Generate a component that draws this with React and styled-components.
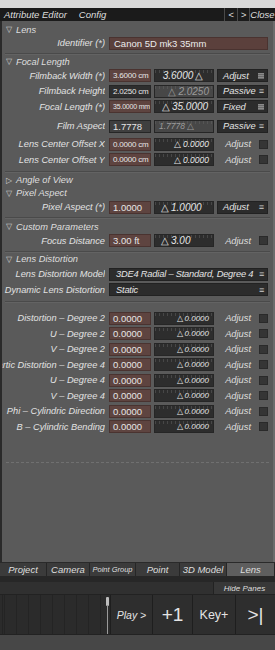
import styled, { createGlobalStyle } from "styled-components";

const Global = createGlobalStyle`
  html, body {
    margin: 0;
    padding: 0;
    background: #474747;
    overflow: hidden;
  }
  * { box-sizing: border-box; }
`;

const Page = styled.div`
  width: 275px;
  height: 650px;
  display: flex;
  flex-direction: column;
  font-family: "Liberation Sans", Arial, sans-serif;
  color: #dedede;
`;

const TopStrip = styled.div`
  height: 8px;
  background: #d9d9d9;
`;

const TitleBar = styled.div`
  height: 13px;
  background: #1b1b1b;
  display: flex;
  align-items: center;
  font-size: 9.5px;
  font-style: italic;
`;

const TitleItem = styled.span`
  padding-left: ${(p) => p.$pad || 4}px;
`;

const TitleButtons = styled.div`
  margin-left: auto;
  display: flex;
  height: 100%;
`;

const TitleButton = styled.div`
  width: ${(p) => p.$w}px;
  display: flex;
  align-items: center;
  justify-content: center;
  border-left: 1px solid #4a4a4a;
`;

const Panel = styled.div`
  flex: 1;
  background: #5a5a5a;
  border-left: 2px solid #2a2a2a;
  border-right: 2px solid #6c6c6c;
  padding-top: 2px;
  font-size: 9.25px;
`;

const GroupHeader = styled.div`
  height: 13px;
  display: flex;
  align-items: center;
  gap: 4px;
  padding-left: 4px;
  font-style: italic;
  font-size: 9.3px;
`;

const Arrow = styled.span`
  font-size: 8px;
  font-style: normal;
  color: #cfcfcf;
`;

const Separator = styled.div`
  height: 2px;
  margin: ${(p) => p.$m || "2px 3px 1px"};
  background: #4a4a4a;
  border-bottom: 1px solid #636363;
`;

const Dashed = styled.div`
  margin: 27px 4px 0;
  border-top: 1px dashed #707070;
`;

const Gap = styled.div`
  height: ${(p) => p.$h}px;
`;

const Row = styled.div`
  height: ${(p) => p.$h || 15.5}px;
  display: flex;
  align-items: center;
`;

const Label = styled.div`
  width: 103px;
  flex: none;
  display: flex;
  justify-content: flex-end;
  overflow: hidden;
  white-space: nowrap;
  font-style: italic;
  margin-right: 4px;
  color: #e2e2e2;
`;

const Field = styled.div`
  height: 13px;
  width: 42px;
  flex: none;
  display: flex;
  align-items: center;
  padding-left: 3px;
  background: ${(p) => (p.$red ? "#5e4440" : p.$gray ? "#3f3f3f" : "#2e2e2e")};
  border: 1px solid ${(p) => (p.$red ? "#4a3330" : "#262626")};
  font-size: ${(p) => p.$fs || 9.5}px;
  letter-spacing: ${(p) => (p.$fs ? "-0.2px" : "0")};
  color: #e6e6e6;
  white-space: nowrap;
  overflow: hidden;
`;

const IdField = styled.div`
  height: 13px;
  width: 159px;
  flex: none;
  display: flex;
  align-items: center;
  padding-left: 4px;
  background: #5b403c;
  border: 1px solid #4a3330;
  font-size: 9.5px;
  color: #ececec;
`;

const Slider = styled.div`
  height: 13px;
  width: 60px;
  margin-left: 3px;
  flex: none;
  display: flex;
  align-items: center;
  justify-content: ${(p) => p.$align || "flex-end"};
  padding: 0 4px;
  background-color: ${(p) => (p.$dim ? "#474747" : "#2d2d2d")};
  background-image: repeating-linear-gradient(
    90deg,
    ${(p) => (p.$dim ? "#555" : "#474747")} 0 1px,
    transparent 1px 4px
  );
  background-size: 100% 3px;
  background-repeat: no-repeat;
  background-position: top;
  border: 1px solid #262626;
  font-style: italic;
  font-size: ${(p) => p.$fs || 10}px;
  color: ${(p) => (p.$dim ? "#9a9a9a" : "#e6e6e6")};
  white-space: nowrap;
`;

const Delta = styled.span`
  font-style: normal;
  margin: 0 2px;
`;

const Dropdown = styled.div`
  height: 13px;
  width: ${(p) => p.$w || 51}px;
  margin-left: ${(p) => (p.$w ? 0 : 3)}px;
  flex: none;
  display: flex;
  align-items: center;
  padding: 0 3px 0 ${(p) => (p.$w ? 6 : 5)}px;
  background: #2c2c2c;
  border: 1px solid #222;
  font-style: italic;
  font-size: 9.3px;
  letter-spacing: ${(p) => (p.$w ? "-0.2px" : "0")};
  color: #e4e4e4;
  white-space: nowrap;
  overflow: hidden;
`;

const Menu = styled.span`
  margin-left: auto;
  padding-left: 2px;
  font-style: normal;
  font-size: 9px;
  color: #cfcfcf;
`;

const Block = styled.span`
  margin-left: auto;
  width: 6px;
  height: 6px;
  background: repeating-linear-gradient(180deg, #8a8a8a 0 1px, #6a6a6a 1px 2px);
`;

const CheckCell = styled.div`
  width: 54px;
  flex: none;
  display: flex;
  align-items: center;
  justify-content: flex-end;
  gap: 8px;
  font-style: italic;
  font-size: 9.3px;
`;

const Check = styled.span`
  width: 9px;
  height: 9px;
  background: #353535;
  border: 1px solid #2a2a2a;
`;

const TabBar = styled.div`
  height: 14px;
  display: flex;
  background: #3b3b3b;
  border-top: 1px solid #2a2a2a;
`;

const Tab = styled.div`
  width: ${(p) => p.$w}px;
  display: flex;
  align-items: center;
  justify-content: center;
  font-style: italic;
  font-size: ${(p) => p.$fs || 9.5}px;
  background: ${(p) => (p.$active ? "#5e5e5e" : "#3b3b3b")};
  border-right: 1px solid #262626;
  white-space: nowrap;
`;

const DarkStrip = styled.div`
  height: 6px;
  background: #272727;
`;

const HideBar = styled.div`
  height: 12px;
  display: flex;
  justify-content: flex-end;
  background: #303030;
`;

const HideButton = styled.div`
  width: 62px;
  display: flex;
  align-items: center;
  justify-content: center;
  background: #383838;
  border-left: 1px solid #222;
  font-style: italic;
  font-size: 8px;
`;

const Timeline = styled.div`
  height: 41px;
  display: flex;
  background: #2b2b2b;
  border-top: 1px solid #222;
  border-bottom: 1px solid #222;
`;

const Scrub = styled.div`
  position: relative;
  width: 110px;
  flex: none;
  background-color: #2b2b2b;
  background-image: repeating-linear-gradient(
    90deg,
    #242424 0 1px,
    transparent 1px 12px
  );
  background-position: 4px 0;
`;

const Handle = styled.div`
  position: absolute;
  left: 106px;
  top: 2px;
  width: 3px;
  height: 9px;
  background: #bdbdbd;
  border-radius: 1px;
`;

const HandleLine = styled.div`
  position: absolute;
  left: 107px;
  top: 10px;
  bottom: 0;
  width: 1px;
  background: #9a9a9a;
`;

const TimeButton = styled.div`
  width: ${(p) => p.$w}px;
  flex: none;
  display: flex;
  align-items: center;
  justify-content: center;
  border-left: 1px solid #1e1e1e;
  background: #2e2e2e;
  font-size: ${(p) => p.$fs}px;
  font-style: ${(p) => (p.$italic ? "italic" : "normal")};
  color: #e4e4e4;
`;

const Bottom = styled.div`
  height: 15px;
  background: #474747;
`;

const MenuIcon = ({ kind }) => (kind === "block" ? <Block /> : <Menu>≡</Menu>);

const NumRow = ({ label, v1, red, gray, fs1, s, sAlign, sDim, sFs, mode, icon, check }) => (
  <Row>
    <Label>{label}</Label>
    <Field $red={red} $gray={gray} $fs={fs1}>{v1}</Field>
    <Slider $align={sAlign} $dim={sDim} $fs={sFs}>{s}</Slider>
    {check ? (
      <CheckCell>
        Adjust
        <Check />
      </CheckCell>
    ) : (
      <Dropdown>
        {mode}
        <MenuIcon kind={icon} />
      </Dropdown>
    )}
  </Row>
);

const delta = (v, after) =>
  after ? (
    <>
      {v}
      <Delta>△</Delta>
    </>
  ) : (
    <>
      <Delta>△</Delta>
      {v}
    </>
  );

const distortionRows = [
  "Distortion – Degree 2",
  "U – Degree 2",
  "V – Degree 2",
  "Quartic Distortion – Degree 4",
  "U – Degree 4",
  "V – Degree 4",
  "Phi – Cylindric Direction",
  "B – Cylindric Bending",
];

const tabs = [
  { name: "Project", w: 47 },
  { name: "Camera", w: 43 },
  { name: "Point Group", w: 46, fs: 7.5 },
  { name: "Point", w: 44 },
  { name: "3D Model", w: 47 },
  { name: "Lens", w: 48, active: true },
];

export default function App() {
  return (
    <Page>
      <Global />
      <TopStrip />
      <TitleBar>
        <TitleItem>Attribute Editor</TitleItem>
        <TitleItem $pad={12}>Config</TitleItem>
        <TitleButtons>
          <TitleButton $w={13}>&lt;</TitleButton>
          <TitleButton $w={12}>&gt;</TitleButton>
          <TitleButton $w={26}>Close</TitleButton>
        </TitleButtons>
      </TitleBar>

      <Panel>
        <GroupHeader>
          <Arrow>▽</Arrow>Lens
        </GroupHeader>
        <Row $h={14}>
          <Label>Identifier (*)</Label>
          <IdField>Canon 5D mk3 35mm</IdField>
        </Row>
        <Separator $m="3px 3px 0" />

        <GroupHeader>
          <Arrow>▽</Arrow>Focal Length
        </GroupHeader>
        <NumRow label="Filmback Width (*)" v1="3.6000 cm" red fs1={8} s={delta("3.6000", true)} sAlign="center" mode="Adjust" icon="block" />
        <NumRow label="Filmback Height" v1="2.0250 cm" fs1={8} s={delta("2.0250")} sDim mode="Passive" />
        <NumRow label="Focal Length (*)" v1="35.0000 mm" red fs1={7} s={delta("35.0000")} sAlign="center" mode="Fixed" icon="block" />
        <Gap $h={4} />
        <NumRow label="Film Aspect" v1="1.7778" gray s={delta("1.7778", true)} sDim sAlign="flex-start" sFs={8.5} mode="Passive" />
        <Gap $h={2.5} />
        <NumRow label="Lens Center Offset X" v1="0.0000 cm" red fs1={8} s={delta("0.0000")} sFs={8.5} check />
        <NumRow label="Lens Center Offset Y" v1="0.0000 cm" red fs1={8} s={delta("0.0000")} sFs={8.5} check />
        <Separator $m="3px 3px 1px" />

        <GroupHeader>
          <Arrow>▷</Arrow>Angle of View
        </GroupHeader>
        <GroupHeader>
          <Arrow>▽</Arrow>Pixel Aspect
        </GroupHeader>
        <NumRow label="Pixel Aspect (*)" v1="1.0000" red s={delta("1.0000")} sAlign="flex-start" mode="Adjust" />
        <Separator />

        <GroupHeader>
          <Arrow>▽</Arrow>Custom Parameters
        </GroupHeader>
        <NumRow label="Focus Distance" v1="3.00 ft" red s={delta("3.00")} sAlign="flex-start" check />
        <Separator $m="2px 3px 0" />

        <GroupHeader>
          <Arrow>▽</Arrow>Lens Distortion
        </GroupHeader>
        <Gap $h={1} />
        <Row>
          <Label>Lens Distortion Model</Label>
          <Dropdown $w={159}>
            3DE4 Radial – Standard, Degree 4
            <Menu>≡</Menu>
          </Dropdown>
        </Row>
        <Row>
          <Label>Dynamic Lens Distortion</Label>
          <Dropdown $w={159}>
            Static
            <Menu>≡</Menu>
          </Dropdown>
        </Row>
        <Separator $m="3px 3px 8px" />
        {distortionRows.map((name) => (
          <NumRow key={name} label={name} v1="0.0000" red s={delta("0.0000")} sFs={8} check />
        ))}
        <Dashed />
      </Panel>

      <TabBar>
        {tabs.map((t) => (
          <Tab key={t.name} $w={t.w} $fs={t.fs} $active={t.active}>
            {t.name}
          </Tab>
        ))}
      </TabBar>
      <DarkStrip />
      <HideBar>
        <HideButton>Hide Panes</HideButton>
      </HideBar>
      <Timeline>
        <Scrub>
          <Handle />
          <HandleLine />
        </Scrub>
        <TimeButton $w={42} $fs={10.5} $italic>
          Play &gt;
        </TimeButton>
        <TimeButton $w={40} $fs={19}>
          +1
        </TimeButton>
        <TimeButton $w={43} $fs={12.5}>
          Key+
        </TimeButton>
        <TimeButton $w={40} $fs={19}>
          &gt;|
        </TimeButton>
      </Timeline>
      <Bottom />
    </Page>
  );
}
